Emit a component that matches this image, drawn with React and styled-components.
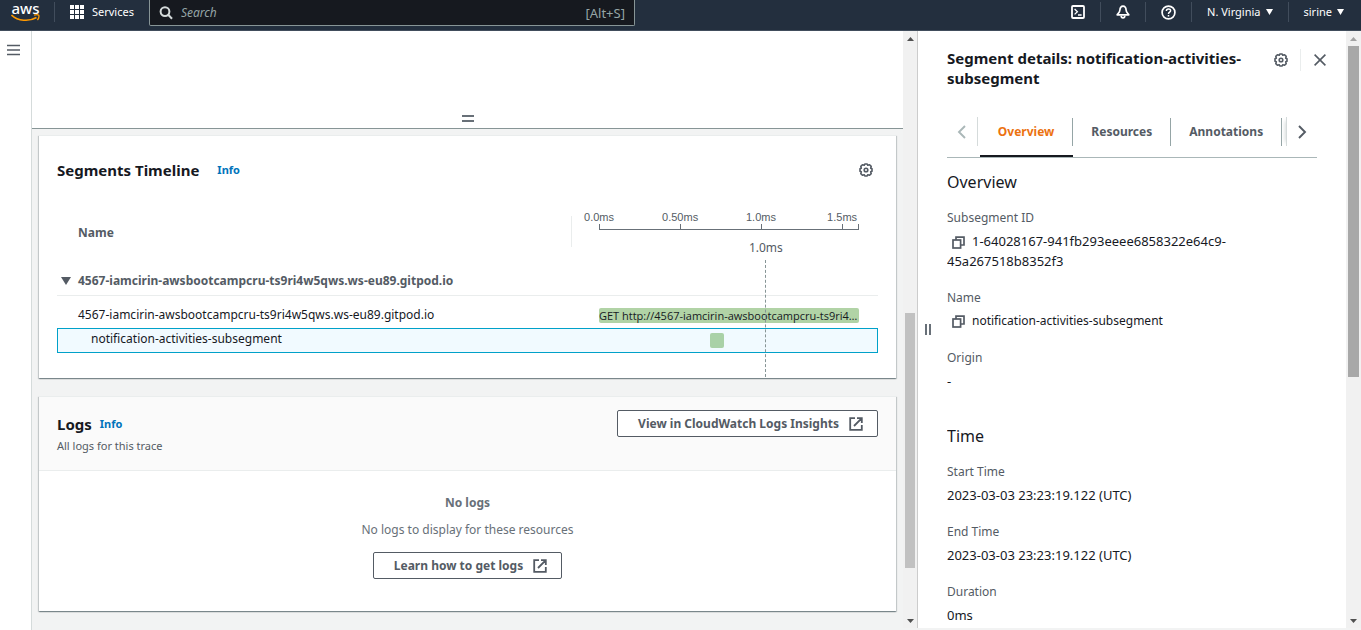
import React from "react";
import styled, { createGlobalStyle, css } from "styled-components";

const GlobalStyle = createGlobalStyle`
  *, *::before, *::after { box-sizing: border-box; }
  body {
    margin: 0;
    color: #16191f;
    background: #f2f3f3;
    font: 12px/20px "Noto Sans", "Open Sans", sans-serif;
  }
  h1, h2, h3, p, dl, dd { margin: 0; }
  button { font: inherit; color: inherit; cursor: pointer; }
  svg { display: block; flex: none; }
`;

const Page = styled.div`
  display: flex;
  flex-direction: column;
  height: 100vh;
  overflow: hidden;
`;

/* ---------- top navigation ---------- */

const TopNav = styled.header`
  flex: none;
  display: flex;
  align-items: flex-start;
  height: 31px;
  padding-left: 11px;
  background: #232f3e;
  border-bottom: 1px solid #414d5c;
  color: #fff;
  font-size: 11px;
`;

const Logo = styled.a`
  display: flex;
  flex-direction: column;
  align-items: center;
  width: 29px;
  height: 25px;
  color: #fff;
  font-size: 15px;
  font-weight: 500;
  line-height: 16px;
  text-decoration: none;
  svg { margin-top: -2px; }
`;

const NavButton = styled.button`
  display: flex;
  align-items: center;
  gap: ${(p) => p.$gap || 5}px;
  height: 24px;
  padding: 0 15px;
  border: 0;
  background: none;
  white-space: nowrap;
`;

const NavRule = styled.span`
  width: 1px;
  height: 20px;
  margin-top: 2px;
  background: #414d5c;
`;

const SearchBox = styled.label`
  flex: 0 1 486px;
  display: flex;
  align-items: center;
  gap: 8px;
  height: 26px;
  padding: 0 9px;
  background: #16191f;
  border: 1px solid #879596;
  border-top: 0;
  border-radius: 0 0 2px 2px;
  color: #95a5a6;
  font-size: 13px;
`;

const SearchInput = styled.input`
  flex: 1;
  min-width: 0;
  padding: 0;
  border: 0;
  outline: 0;
  background: none;
  color: #fff;
  font: 12px/20px "Noto Sans", sans-serif;
  &::placeholder { color: #95a5a6; font-style: italic; opacity: 1; }
`;

const NavEnd = styled.nav`
  display: flex;
  margin-left: auto;
  padding-right: 2px;
`;

const LogoGap = styled.span`
  width: 14px;
`;

/* ---------- shell ---------- */

const Shell = styled.div`
  flex: 1;
  min-height: 0;
  display: flex;
`;

const Rail = styled.aside`
  flex: none;
  width: 32px;
  padding: 7px 0 0 1px;
  background: #fff;
  border-right: 1px solid #d5dbdb;
`;

const IconButton = styled.button`
  display: flex;
  align-items: center;
  justify-content: center;
  width: 24px;
  height: 24px;
  padding: 0;
  border: 0;
  background: none;
  color: #545b64;
`;

const Main = styled.main`
  flex: 1;
  min-width: 0;
  overflow: hidden;
`;

const MapPane = styled.section`
  display: flex;
  align-items: flex-end;
  justify-content: center;
  height: 98px;
  padding-bottom: 6px;
  background: #fff;
  border-bottom: 1px solid #879596;
`;

const Cards = styled.div`
  display: flex;
  flex-direction: column;
  gap: 18px;
  padding: 6px 7px 18px;
`;

const Card = styled.section`
  background: #fff;
  border-top: 1px solid #eaeded;
  box-shadow: 0 1px 1px 0 rgba(0, 28, 36, 0.3), 1px 1px 1px 0 rgba(0, 28, 36, 0.15),
    -1px 1px 1px 0 rgba(0, 28, 36, 0.15);
`;

const CardTitle = styled.h2`
  font-size: 15px;
  line-height: 20px;
  font-weight: 700;
`;

const InfoLink = styled.a`
  color: #0073bb;
  font-size: 11px;
  font-weight: 700;
  text-decoration: none;
`;

const TitleLine = styled.div`
  display: flex;
  align-items: center;
  gap: ${(p) => p.$gap}px;
`;

const TimelineHead = styled.div`
  display: flex;
  align-items: center;
  justify-content: space-between;
  padding: 22px 18px 0;
`;

/* ---------- segments table ---------- */

const TableWrap = styled.div`
  position: relative;
  padding: 17px 18px 25px;
`;

const SegTable = styled.table`
  width: 100%;
  table-layout: fixed;
  border-collapse: separate;
  border-spacing: 0;
  th, td { padding: 0; text-align: left; }
`;

const TimelineCol = styled.col`
  width: 307px;
`;

const HeadRow = styled.tr`
  height: 65px;
  color: #545b64;
`;

const NameHead = styled.th`
  && { padding: 2px 0 0 21px; }
`;

const TimelineArea = styled.div`
  display: flex;
  margin: 0 19px 0 28px;
`;

const ScaleHead = styled.div`
  height: 31px;
  padding: 1px 19px 0 27px;
  border-left: 1px solid #eaeded;
`;

const Scale = styled.div`
  position: relative;
  height: 13px;
  border-bottom: 1px solid #687078;
`;

const Tick = styled.span`
  position: absolute;
  bottom: 0;
  width: 1px;
  height: 5px;
  background: #687078;
`;

const TickLabel = styled.span`
  position: absolute;
  bottom: 5px;
  left: 0;
  transform: translateX(-50%);
  font: 11px/14px "Liberation Sans", Arial, sans-serif;
  color: #545b64;
`;

const GroupRow = styled.tr`
  height: 32px;
  color: #545b64;
  && td { padding-top: 3px; border-bottom: 1px solid #eaeded; }
`;

const GroupToggle = styled.button`
  display: flex;
  align-items: center;
  gap: 7px;
  padding: 0 0 0 4px;
  border: 0;
  background: none;
  font-weight: 700;
`;

const SegName = styled.div`
  padding-left: 21px;
  white-space: nowrap;
  line-height: 20px;
`;

const SegRow = styled.tr`
  ${(p) =>
    p.$selected
      ? css`
          height: 25px;
          background: #f1faff;
          td { vertical-align: top; border: 1px solid #00a1c9; border-width: 1px 0; }
          td:first-child { border-left-width: 1px; }
          td:last-child { border-right-width: 1px; }
          ${SegName} { padding-left: 33px; }
          ${TimelineArea} { margin-top: 4px; margin-right: 18px; }
        `
      : css`
          height: 32px;
          td { vertical-align: bottom; }
          ${SegName} { margin-bottom: 3px; }
          ${TimelineArea} { margin-bottom: 5px; }
        `}
`;

const Bar = styled.span`
  height: 15px;
  overflow: hidden;
  border-radius: 2px;
  background: ${(p) => (p.$alt ? "#a9d1a7" : "#b1d3a6")};
  font: 11px/15px "Open Sans", "Noto Sans", sans-serif;
  white-space: nowrap;
`;

const CursorTrack = styled.div`
  position: absolute;
  top: 64px;
  bottom: 1px;
  right: 37px;
  width: 260px;
  pointer-events: none;
`;

const Cursor = styled.div`
  position: absolute;
  top: 14px;
  bottom: 0;
  border-left: 1px dashed #879596;
`;

const CursorLabel = styled.span`
  position: absolute;
  bottom: 100%;
  left: 0;
  transform: translateX(-50%);
  color: #545b64;
  line-height: 24px;
`;

/* ---------- logs ---------- */

const LogsHead = styled.div`
  display: flex;
  align-items: flex-start;
  justify-content: space-between;
  padding: 13px 18px 14px;
  background: #fafafa;
  border-bottom: 1px solid #eaeded;
`;

const LogsTitle = styled.div`
  padding-top: 4px;
`;

const Hint = styled.p`
  padding-top: 2px;
  color: #545b64;
  font-size: 11px;
`;

const OutlineButton = styled.button`
  display: flex;
  align-items: center;
  gap: 10px;
  height: 27px;
  padding: 0 14px 0 20px;
  background: #fff;
  border: 1px solid #545b64;
  border-radius: 2px;
  color: #545b64;
  font-weight: 700;
  white-space: nowrap;
`;

const EmptyLogs = styled.div`
  display: flex;
  flex-direction: column;
  align-items: center;
  gap: 7px;
  padding: 22px 18px 32px;
  color: #687078;
`;

const EmptyAction = styled.div`
  padding-top: 5px;
`;

/* ---------- scrollbar ---------- */

const ScrollTrack = styled.div`
  flex: none;
  display: flex;
  flex-direction: column;
  width: ${(p) => p.$width}px;
  margin-bottom: ${(p) => p.$inset || 0}px;
  background: #f1f1f1;
`;

const ScrollArrow = styled.span`
  flex: none;
  display: flex;
  align-items: center;
  justify-content: center;
  height: 15px;
  color: ${(p) => (p.$dim ? "#a3a3a3" : "#505050")};
`;

const ScrollPart = styled.span`
  flex: ${(p) => p.$grow} 1 0;
  margin: 0 2px;
  background: ${(p) => p.$fill || "none"};
`;

/* ---------- details panel ---------- */

const Details = styled.aside`
  flex: none;
  display: flex;
  width: 444px;
  margin-bottom: 2px;
  background: #fff;
  border-left: 1px solid #ccc;
`;

const Handle = styled.div`
  flex: none;
  display: flex;
  align-items: center;
  width: 29px;
  padding-left: 7px;
`;

const DetailsBody = styled.div`
  flex: 1;
  min-width: 0;
  overflow: hidden;
  padding: 17px 29px 0 0;
`;

const DetailsHead = styled.div`
  display: flex;
  align-items: flex-start;
  justify-content: space-between;
`;

const DetailsTitle = styled.h2`
  flex: 1;
  font-size: 15px;
  line-height: 20px;
`;

const HeadActions = styled.div`
  display: flex;
  align-items: center;
  gap: 7px;
  margin-right: -15px;
`;

const ActionRule = styled.span`
  width: 1px;
  height: 22px;
  background: #eaeded;
`;

const Tabs = styled.div`
  display: flex;
  align-items: center;
  height: 52px;
  margin-top: 18px;
  border-bottom: 1px solid #aab7b8;
`;

const TabArrow = styled.button`
  display: flex;
  align-items: center;
  justify-content: center;
  width: 32px;
  height: 29px;
  padding: 0;
  background: none;
  border: 0;
  color: ${(p) => (p.$dim ? "#aab7b8" : "#545b64")};
  ${(p) =>
    p.$dim
      ? "border-right: 1px solid #d5dbdb;"
      : "border-left: 1px solid #d5dbdb; box-shadow: -5px 0 4px -4px #d5dbdb;"}
`;

const TabList = styled.div`
  flex: 1;
  display: flex;
  margin: 0 4px 0 2px;
  align-self: stretch;
`;

const Tab = styled.button`
  display: flex;
  align-items: center;
  padding: 2px 0 0;
  border: 0;
  border-bottom: 2px solid ${(p) => (p.$active ? "#16191f" : "transparent")};
  background: none;
  color: ${(p) => (p.$active ? "#ec7211" : "#545b64")};
  font-weight: 700;
`;

const TabText = styled.span`
  padding: 4px 18px;
  border-right: 1px solid #95a5a6;
`;

const SectionTitle = styled.h3`
  margin-top: ${(p) => (p.$first ? 14 : 35)}px;
  margin-bottom: 15px;
  font-size: 16px;
  line-height: 20px;
  font-weight: 400;
`;

const Fields = styled.dl`
  display: flex;
  flex-direction: column;
  gap: 16px;
`;

const FieldLabel = styled.dt`
  padding-top: 1px;
  color: #545b64;
`;

const FieldValue = styled.dd`
  max-width: 290px;
  padding-top: 3px;
  font-size: ${(p) => (p.$name ? 12 : 13)}px;
`;

const CopyButton = styled.button`
  display: inline-block;
  padding: 0 7px 0 5px;
  border: 0;
  background: none;
  color: #545b64;
  vertical-align: -3px;
`;

/* ---------- drawings ---------- */

const Caret = ({ w = 7, h = 6 }) => (
  <svg width={w} height={h} viewBox="0 0 8 6" preserveAspectRatio="none"><path d="M0 0H8L4 6Z" fill="currentColor" /></svg>
);

const Smile = () => (
  <svg width="29" height="8" viewBox="0 0 29 8" fill="none" stroke="#f90">
    <path d="M0.5 1C7 7 18 8 25.5 3.5" strokeWidth="1.6" />
    <path d="M23 1.2C25 .6 27 .5 27.8 1.2C28.2 2.5 27.6 4.6 26.4 6" strokeWidth="1.3" />
  </svg>
);

const AppsGrid = () => (
  <svg width="14" height="14" fill="#fff">
    {[0, 5, 10].map((y) => [0, 5, 10].map((x) => <rect key={`${x}${y}`} x={x} y={y} width="4" height="4" />))}
  </svg>
);

const Magnifier = () => (
  <svg width="14" height="14" viewBox="0 0 14 14" fill="none" stroke="#d5dbdb" strokeWidth="2">
    <circle cx="6" cy="5.6" r="4.4" /><path d="M9.2 8.8L13 12.8" />
  </svg>
);

const Terminal = () => (
  <svg width="14" height="14" viewBox="0 0 14 14" fill="none" stroke="#fff">
    <rect x="1" y="1" width="12" height="12" rx="1" strokeWidth="1.8" />
    <path d="M3.6 4L6.4 6.7L3.6 9.4M7 10H10.6" strokeWidth="1.3" />
  </svg>
);

const Bell = () => (
  <svg width="14" height="14" viewBox="0 0 14 14" fill="none" stroke="#fff" strokeWidth="1.7" strokeLinejoin="round">
    <path d="M7 1.2C5 1.2 4 2.8 4 4.6C4 7 2.8 8 1.2 9.8H12.8C11.2 8 10 7 10 4.6C10 2.8 9 1.2 7 1.2Z" />
    <path d="M5.2 10.8C5.2 13.6 8.8 13.6 8.8 10.8" />
  </svg>
);

const Help = () => (
  <svg width="15" height="15" viewBox="0 0 15 15" fill="none" stroke="#fff" strokeWidth="1.7">
    <circle cx="7.5" cy="7.5" r="6.4" />
    <path d="M5.4 6C5.4 3.2 9.7 3.4 9.6 5.8C9.6 7.2 7.5 7.1 7.5 8.9M7.5 10V11.5" strokeWidth="1.5" />
  </svg>
);

const Menu = () => (
  <svg width="13" height="12" viewBox="0 0 13 12" stroke="currentColor" strokeWidth="1.6">
    <path d="M0 1.5H13M0 6H13M0 10.5H13" />
  </svg>
);

const Gear = () => (
  <svg width="14" height="14" viewBox="0 0 14 14" fill="none" stroke="currentColor" strokeWidth="1.6" strokeLinejoin="round">
    <path d="M5.8 1H8.2L8.8 2.3L10.6 1.8L12.2 3.4L11.7 5.2L13 5.8V8.2L11.7 8.8L12.2 10.6L10.6 12.2L8.8 11.7L8.2 13H5.8L5.2 11.7L3.4 12.2L1.8 10.6L2.3 8.8L1 8.2V5.8L2.3 5.2L1.8 3.4L3.4 1.8L5.2 2.3Z" />
    <circle cx="7" cy="7" r="1.8" />
  </svg>
);

const External = () => (
  <svg width="14" height="14" viewBox="0 0 14 14" fill="none" stroke="currentColor" strokeWidth="1.8">
    <path d="M6 1.2H1.2V12.8H12.8V8M8 1.2H12.8V6M12.6 1.4L5 9" />
  </svg>
);

const Copy = () => (
  <svg width="13" height="13" viewBox="0 0 13 13" fill="none" stroke="currentColor" strokeWidth="1.7">
    <rect x="1" y="4" width="7.6" height="8" /><path d="M4 4V1.2H12V9H8.6" />
  </svg>
);

const Close = () => (
  <svg width="12" height="12" viewBox="0 0 12 12" stroke="currentColor" strokeWidth="1.6">
    <path d="M.6 .6L11.4 11.4M11.4 .6L.6 11.4" />
  </svg>
);

const Chevron = ({ left }) => (
  <svg width="9" height="14" viewBox="0 0 9 14" fill="none" stroke="currentColor" strokeWidth="1.9">
    <path d={left ? "M8 1L2 7L8 13" : "M1 1L7 7L1 13"} />
  </svg>
);

const Grip = ({ vertical }) =>
  vertical ? (
    <svg width="6" height="11" fill="#687078"><path d="M0 0H2V11H0ZM4 0H6V11H4Z" /></svg>
  ) : (
    <svg width="12" height="7" fill="#687078"><path d="M0 0H12V2H0ZM0 5H12V7H0Z" /></svg>
  );

const ArrowMark = ({ up }) => (
  <svg width="7" height="4" fill="currentColor"><path d={up ? "M0 4L3.5 0L7 4Z" : "M0 0H7L3.5 4Z"} /></svg>
);

/* ---------- parts ---------- */

const Scrollbar = ({ width, inset, before, thumb, after, fill, dimTop }) => (
  <ScrollTrack $width={width} $inset={inset} aria-hidden="true">
    <ScrollArrow $dim={dimTop}><ArrowMark up /></ScrollArrow>
    <ScrollPart $grow={before} />
    <ScrollPart $grow={thumb} $fill={fill} />
    <ScrollPart $grow={after} />
    <ScrollArrow><ArrowMark /></ScrollArrow>
  </ScrollTrack>
);

const HOST = "4567-iamcirin-awsbootcampcru-ts9ri4w5qws.ws-eu89.gitpod.io";

const TICKS = [
  { at: "0%", label: "0.0ms" },
  { at: "31.2%", label: "0.50ms" },
  { at: "62.3%", label: "1.0ms" },
  { at: "93.5%", label: "1.5ms" },
  { at: "calc(100% - 1px)" },
];

const SEGMENTS = [
  { name: HOST, start: 0, span: 100, text: "GET http://4567-iamcirin-awsbootcampcru-ts9ri4…" },
  { name: "notification-activities-subsegment", start: 42.7, span: 5.4, selected: true },
];

const DETAILS = [
  {
    title: "Overview",
    fields: [
      { label: "Subsegment ID", value: "1-64028167-941fb293eeee6858322e64c9-45a267518b8352f3", copy: true },
      { label: "Name", value: "notification-activities-subsegment", copy: true, name: true },
      { label: "Origin", value: "-" },
    ],
  },
  {
    title: "Time",
    fields: [
      { label: "Start Time", value: "2023-03-03 23:23:19.122 (UTC)" },
      { label: "End Time", value: "2023-03-03 23:23:19.122 (UTC)" },
      { label: "Duration", value: "0ms" },
    ],
  },
];

export default function App() {
  return (
    <Page>
      <GlobalStyle />
      <TopNav>
        <Logo href="#home">aws<Smile /></Logo>
        <LogoGap />
        <NavRule />
        <NavButton $gap={8}><AppsGrid />Services</NavButton>
        <SearchBox>
          <Magnifier />
          <SearchInput type="search" aria-label="Search" placeholder="Search" />
          <span>[Alt+S]</span>
        </SearchBox>
        <NavEnd>
          <NavButton aria-label="CloudShell"><Terminal /></NavButton>
          <NavRule />
          <NavButton aria-label="Notifications"><Bell /></NavButton>
          <NavRule />
          <NavButton aria-label="Help"><Help /></NavButton>
          <NavRule />
          <NavButton>N. Virginia<Caret /></NavButton>
          <NavRule />
          <NavButton>sirine<Caret /></NavButton>
        </NavEnd>
      </TopNav>

      <Shell>
        <Rail><IconButton aria-label="Open navigation"><Menu /></IconButton></Rail>

        <Main>
          <MapPane><Grip /></MapPane>
          <Cards>
            <Card>
              <TimelineHead>
                <TitleLine $gap={18}>
                  <CardTitle>Segments Timeline</CardTitle>
                  <InfoLink href="#timeline-info">Info</InfoLink>
                </TitleLine>
                <IconButton aria-label="Timeline preferences"><Gear /></IconButton>
              </TimelineHead>
              <TableWrap>
                <SegTable>
                  <colgroup><col /><TimelineCol /></colgroup>
                  <thead>
                    <HeadRow>
                      <NameHead scope="col">Name</NameHead>
                      <th aria-label="Timeline">
                        <ScaleHead>
                          <Scale>
                            {TICKS.map((t) => (
                              <Tick key={t.at} style={{ left: t.at }}>
                                {t.label && <TickLabel>{t.label}</TickLabel>}
                              </Tick>
                            ))}
                          </Scale>
                        </ScaleHead>
                      </th>
                    </HeadRow>
                  </thead>
                  <tbody>
                    <GroupRow>
                      <td colSpan={2}><GroupToggle><Caret w={10} h={8} />{HOST}</GroupToggle></td>
                    </GroupRow>
                    {SEGMENTS.map((s) => (
                      <SegRow key={s.name} $selected={s.selected}>
                        <td><SegName>{s.name}</SegName></td>
                        <td>
                          <TimelineArea>
                            <Bar $alt={s.selected} style={{ marginLeft: `${s.start}%`, width: `${s.span}%` }}>{s.text}</Bar>
                          </TimelineArea>
                        </td>
                      </SegRow>
                    ))}
                  </tbody>
                </SegTable>
                <CursorTrack>
                  <Cursor style={{ left: "63.8%" }}><CursorLabel>1.0ms</CursorLabel></Cursor>
                </CursorTrack>
              </TableWrap>
            </Card>

            <Card>
              <LogsHead>
                <LogsTitle>
                  <TitleLine $gap={8}>
                    <CardTitle>Logs</CardTitle>
                    <InfoLink href="#logs-info">Info</InfoLink>
                  </TitleLine>
                  <Hint>All logs for this trace</Hint>
                </LogsTitle>
                <OutlineButton>View in CloudWatch Logs Insights<External /></OutlineButton>
              </LogsHead>
              <EmptyLogs>
                <b>No logs</b>
                <p>No logs to display for these resources</p>
                <EmptyAction>
                  <OutlineButton>Learn how to get logs<External /></OutlineButton>
                </EmptyAction>
              </EmptyLogs>
            </Card>
          </Cards>
        </Main>
        <Scrollbar width={14} inset={2} before={267} thumb={255} after={45} fill="#c1c1c1" />

        <Details>
          <Handle><Grip vertical /></Handle>
          <DetailsBody>
            <DetailsHead>
              <DetailsTitle>Segment details: notification-activities-subsegment</DetailsTitle>
              <HeadActions>
                <IconButton aria-label="Panel preferences"><Gear /></IconButton>
                <ActionRule />
                <IconButton aria-label="Close panel"><Close /></IconButton>
              </HeadActions>
            </DetailsHead>
            <Tabs>
              <TabArrow $dim aria-label="Previous tabs"><Chevron left /></TabArrow>
              <TabList role="tablist">
                {["Overview", "Resources", "Annotations"].map((t, i) => (
                  <Tab key={t} role="tab" aria-selected={i === 0} $active={i === 0}><TabText>{t}</TabText></Tab>
                ))}
              </TabList>
              <TabArrow aria-label="Next tabs"><Chevron /></TabArrow>
            </Tabs>
            {DETAILS.map((section, i) => (
              <section key={section.title}>
                <SectionTitle $first={i === 0}>{section.title}</SectionTitle>
                <Fields>
                  {section.fields.map((f) => (
                    <div key={f.label}>
                      <FieldLabel>{f.label}</FieldLabel>
                      <FieldValue $name={f.name}>
                        {f.copy && <CopyButton aria-label={`Copy ${f.label}`}><Copy /></CopyButton>}
                        {f.value}
                      </FieldValue>
                    </div>
                  ))}
                </Fields>
              </section>
            ))}
          </DetailsBody>
          <Scrollbar width={15} before={0} thumb={331} after={236} fill="#a8a8a8" dimTop />
        </Details>
      </Shell>
    </Page>
  );
}
